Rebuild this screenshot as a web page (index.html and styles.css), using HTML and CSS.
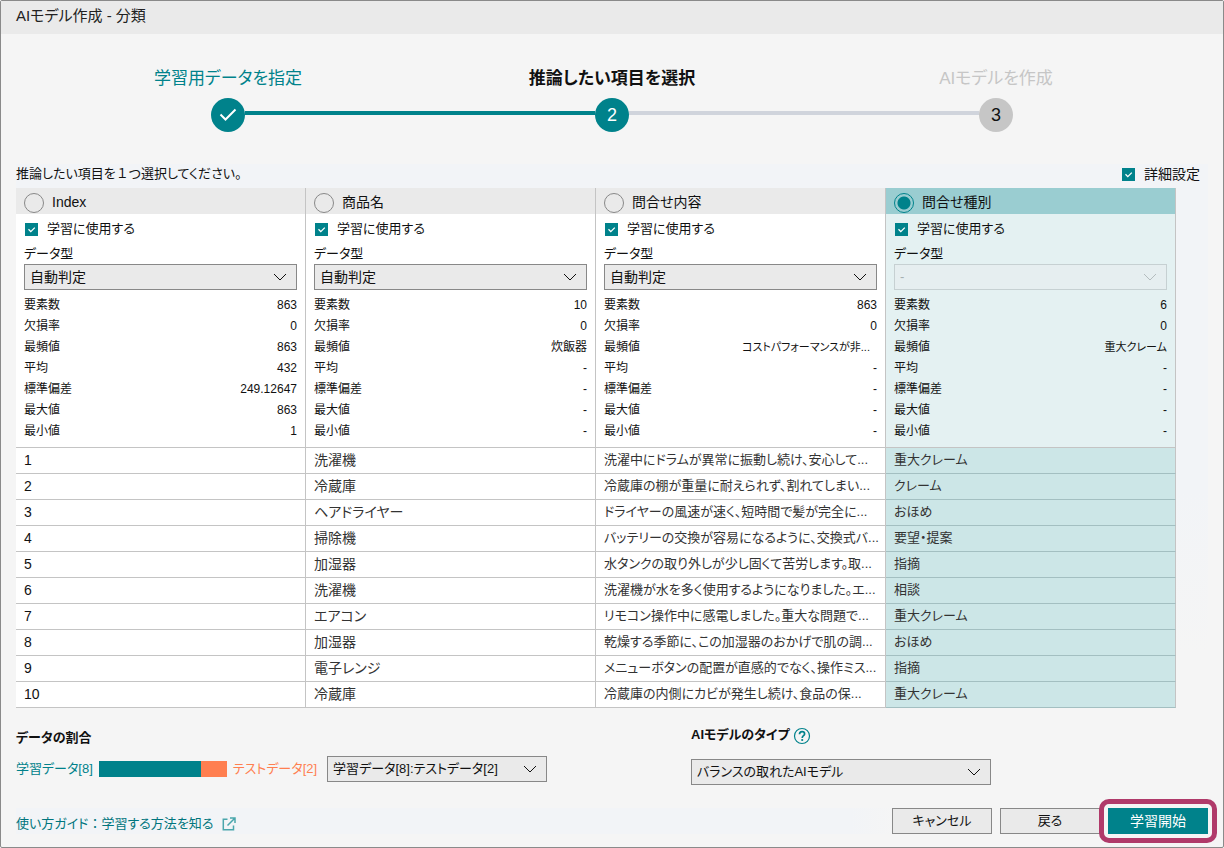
FILE: index.html
```html
<!DOCTYPE html>
<html lang="ja">
<head>
<meta charset="utf-8">
<meta name="viewport" content="width=device-width, initial-scale=1">
<title>AIモデル作成 - 分類</title>
<link rel="stylesheet" href="styles.css">
</head>
<body>
<svg class="symbols" aria-hidden="true">
  <symbol id="chevron" viewBox="0 0 14 8"><path d="M1 1l6 6 6-6" fill="none" stroke="currentColor" stroke-width="1"/></symbol>
</svg>
<main class="window">
  <header class="titlebar"><h1 class="title">AIモデル作成 - 分類</h1></header>

  <ol class="steps">
    <li class="step step-done">
      <span class="step-label">学習用データを指定</span>
      <div class="track"><i class="line line-none"></i><span class="dot"><svg width="18" height="14" viewBox="0 0 18 14" role="img" aria-label="完了"><path d="M1.500 6.500l5 5L16.500 1.500" fill="none" stroke="#fff" stroke-width="2"/></svg></span><i class="line line-done"></i></div>
    </li>
    <li class="step step-current" aria-current="step">
      <span class="step-label">推論したい項目を選択</span>
      <div class="track"><i class="line line-done"></i><span class="dot">2</span><i class="line"></i></div>
    </li>
    <li class="step step-next">
      <span class="step-label">AIモデルを作成</span>
      <div class="track"><i class="line"></i><span class="dot">3</span><i class="line line-none"></i></div>
    </li>
  </ol>

  <section class="items">
    <div class="items-head">
      <p class="caption">推論したい項目を<span class="wide">１</span>つ選択してください。</p>
      <label class="check advanced"><input type="checkbox" class="box" checked><span>詳細設定</span></label>
    </div>
    <table class="grid">
      <thead>
        <tr class="names">
          <th scope="col"><label class="pick"><input type="radio" class="radio" name="target"><span>Index</span></label></th>
          <th scope="col"><label class="pick"><input type="radio" class="radio" name="target"><span>商品名</span></label></th>
          <th scope="col"><label class="pick"><input type="radio" class="radio" name="target"><span>問合せ内容</span></label></th>
          <th scope="col" class="chosen"><label class="pick"><input type="radio" class="radio" name="target" checked><span>問合せ種別</span></label></th>
        </tr>
        <tr class="details">
          <td>
            <label class="check"><input type="checkbox" class="box" checked><span>学習に使用する</span></label>
            <label class="type" for="type1">データ型</label>
            <div class="select"><select id="type1" class="kanji"><option>自動判定</option></select><svg class="chevron"><use href="#chevron"/></svg></div>
            <dl class="stats"><dt>要素数</dt><dd>863</dd><dt>欠損率</dt><dd>0</dd><dt>最頻値</dt><dd>863</dd><dt>平均</dt><dd>432</dd><dt>標準偏差</dt><dd>249.12647</dd><dt>最大値</dt><dd>863</dd><dt>最小値</dt><dd>1</dd></dl>
          </td>
          <td>
            <label class="check"><input type="checkbox" class="box" checked><span>学習に使用する</span></label>
            <label class="type" for="type2">データ型</label>
            <div class="select"><select id="type2" class="kanji"><option>自動判定</option></select><svg class="chevron"><use href="#chevron"/></svg></div>
            <dl class="stats"><dt>要素数</dt><dd>10</dd><dt>欠損率</dt><dd>0</dd><dt>最頻値</dt><dd>炊飯器</dd><dt>平均</dt><dd>-</dd><dt>標準偏差</dt><dd>-</dd><dt>最大値</dt><dd>-</dd><dt>最小値</dt><dd>-</dd></dl>
          </td>
          <td>
            <label class="check"><input type="checkbox" class="box" checked><span>学習に使用する</span></label>
            <label class="type" for="type3">データ型</label>
            <div class="select"><select id="type3" class="kanji"><option>自動判定</option></select><svg class="chevron"><use href="#chevron"/></svg></div>
            <dl class="stats"><dt>要素数</dt><dd>863</dd><dt>欠損率</dt><dd>0</dd><dt>最頻値</dt><dd class="phrase clipped">コストパフォーマンスが非...</dd><dt>平均</dt><dd>-</dd><dt>標準偏差</dt><dd>-</dd><dt>最大値</dt><dd>-</dd><dt>最小値</dt><dd>-</dd></dl>
          </td>
          <td class="chosen">
            <label class="check"><input type="checkbox" class="box" checked><span>学習に使用する</span></label>
            <label class="type" for="type4">データ型</label>
            <div class="select"><select id="type4" disabled><option>-</option></select><svg class="chevron"><use href="#chevron"/></svg></div>
            <dl class="stats"><dt>要素数</dt><dd>6</dd><dt>欠損率</dt><dd>0</dd><dt>最頻値</dt><dd class="phrase">重大クレーム</dd><dt>平均</dt><dd>-</dd><dt>標準偏差</dt><dd>-</dd><dt>最大値</dt><dd>-</dd><dt>最小値</dt><dd>-</dd></dl>
          </td>
        </tr>
      </thead>
      <tbody class="records">
        <tr><td>1</td><td>洗濯機</td><td>洗濯中にドラムが異常に振動し続け、安心して...</td><td class="chosen">重大クレーム</td></tr>
        <tr><td>2</td><td>冷蔵庫</td><td>冷蔵庫の棚が重量に耐えられず、割れてしまい...</td><td class="chosen">クレーム</td></tr>
        <tr><td>3</td><td>ヘアドライヤー</td><td>ドライヤーの風速が速く、短時間で髪が完全に...</td><td class="chosen">おほめ</td></tr>
        <tr><td>4</td><td>掃除機</td><td>バッテリーの交換が容易になるように、交換式バ...</td><td class="chosen">要望・提案</td></tr>
        <tr><td>5</td><td>加湿器</td><td>水タンクの取り外しが少し固くて苦労します。取...</td><td class="chosen">指摘</td></tr>
        <tr><td>6</td><td>洗濯機</td><td>洗濯機が水を多く使用するようになりました。エ...</td><td class="chosen">相談</td></tr>
        <tr><td>7</td><td>エアコン</td><td>リモコン操作中に感電しました。重大な問題で...</td><td class="chosen">重大クレーム</td></tr>
        <tr><td>8</td><td>加湿器</td><td>乾燥する季節に、この加湿器のおかげで肌の調...</td><td class="chosen">おほめ</td></tr>
        <tr><td>9</td><td>電子レンジ</td><td>メニューボタンの配置が直感的でなく、操作ミス...</td><td class="chosen">指摘</td></tr>
        <tr><td>10</td><td>冷蔵庫</td><td>冷蔵庫の内側にカビが発生し続け、食品の保...</td><td class="chosen">重大クレーム</td></tr>
      </tbody>
    </table>
  </section>

  <section class="options">
    <div class="option split">
      <label class="option-name" for="ratio">データの割合</label>
      <div class="ratio">
        <span class="train">学習データ[8]</span>
        <div class="bar"><i class="bar-train" style="width:80%"></i></div>
        <span class="test">テストデータ[2]</span>
        <div class="select ratio-select"><select id="ratio"><option>学習データ[8]:テストデータ[2]</option></select><svg class="chevron"><use href="#chevron"/></svg></div>
      </div>
    </div>
    <div class="option model">
      <div class="model-head">
        <label class="option-name" for="model">AIモデルのタイプ</label>
        <button class="help" type="button" aria-label="ヘルプ"><svg width="18" height="18" viewBox="0 0 18 18"><circle cx="9" cy="9" r="7.500" fill="none" stroke="#00828b" stroke-width="1.200"/><path d="M6.500 7.300C6.500 5.600 7.600 4.600 9.100 4.600s2.500.9 2.500 2.300c0 1.700-2.400 2-2.400 4" fill="none" stroke="#00828b" stroke-width="1.700"/><circle cx="9.200" cy="13" r="1.100" fill="#00828b"/></svg></button>
      </div>
      <div class="select"><select id="model"><option>バランスの取れたAIモデル</option></select><svg class="chevron"><use href="#chevron"/></svg></div>
    </div>
  </section>

  <footer class="footer">
    <a class="guide" href="#"><span>使い方ガイド<span class="wide">：</span>学習する方法を知る</span><svg width="14" height="14" viewBox="0 0 14 14" fill="none" stroke="#4aa6ac" stroke-width="1.500"><path d="M5.500 2.200H1.300v10.500h10.200V8.500M8 1h5v5M13 1L5.500 8.500"/></svg></a>
    <button class="button" type="button">キャンセル</button>
    <button class="button" type="button">戻る</button>
    <button class="button primary" type="button">学習開始</button>
  </footer>
</main>
</body>
</html>
```

FILE: styles.css
```css
* { box-sizing: border-box; }

body {
  margin: 0;
  background: #f5f5f5;
  color: #111;
  font: 13px/20px "Liberation Sans", "Noto Sans CJK JP", sans-serif;
  font-feature-settings: "palt";
}

h1, p, ol, dl, dd { margin: 0; }
button, select, input { font: inherit; font-feature-settings: inherit; color: inherit; margin: 0; }

.symbols { position: absolute; width: 0; height: 0; }
.wide { font-feature-settings: normal; }

.window {
  display: flex;
  flex-direction: column;
  min-height: 100vh;
  border: 1px solid #8a8a8a;
  border-radius: 2px;
}

.titlebar { padding: 3px 15px 6px; background: #eaeaea; }
.title { font-size: 15px; line-height: 24px; font-weight: 400; color: #222; }

/* progress steps */
.steps {
  display: grid;
  grid-template-columns: repeat(3, 1fr);
  padding: 33px 35px 32px;
  list-style: none;
}
.step { text-align: center; }
.step-label { display: block; font-size: 17px; line-height: 24px; }
.step-done .step-label { color: #00828b; }
.step-current .step-label { font-weight: 700; }
.step-next .step-label { color: #c6c6c6; }
.track { display: flex; margin-top: 7px; }
.line { flex: 1; height: 4px; margin-top: 13px; background: #d0d4dc; }
.line-done { background: #00828b; }
.line-none { background: none; }
.dot {
  display: flex;
  align-items: center;
  justify-content: center;
  width: 34px;
  height: 34px;
  border-radius: 50%;
  background: #00828b;
  color: #fff;
  font-size: 18px;
}
.step-next .dot { background: #c6c6c6; color: #111; }

/* item table */
.items { margin: 0 15px; padding-right: 32px; background: linear-gradient(#f2f4f7, #f2f4f7 60%, #f5f5f5 90%); }
.items-head { display: flex; justify-content: space-between; height: 24px; margin-right: -24px; }
.check { display: flex; align-items: center; gap: 9px; }
.advanced { height: 20px; font-size: 14px; }
.box {
  appearance: none;
  width: 13px;
  height: 13px;
  margin-left: 1px;
  background: #00828b url("data:image/svg+xml,%3Csvg xmlns='http://www.w3.org/2000/svg' viewBox='0 0 13 13'%3E%3Cpath d='M3.500 6.300l2.300 2.300 4-4' fill='none' stroke='white' stroke-width='1.300'/%3E%3C/svg%3E");
}
.grid { width: 100%; table-layout: fixed; border-collapse: separate; border-spacing: 0; background: #fff; }
.grid th, .grid td { padding: 0 8px; border-right: 1px solid #c4c4c4; text-align: left; font-weight: 400; }
.names th { height: 26px; background: #eaeaea; font-size: 14px; }
.names .chosen { background: #9acdd1; }
.pick { display: flex; align-items: flex-end; gap: 8px; padding-top: 2px; line-height: 22px; }
.radio {
  appearance: none;
  width: 20px;
  height: 20px;
  border: 1px solid #888;
  border-radius: 50%;
}
.radio:checked { border-color: #00828b; background: radial-gradient(circle closest-side, #00828b 6px, transparent 7px); }
.details td { padding: 5px 8px; border-bottom: 1px solid #c4c4c4; }
.details .chosen { background: #e4f1f2; }
.type { display: block; margin-top: 4px; line-height: 21px; }

.select { display: grid; align-items: center; }
.select select {
  appearance: none;
  grid-area: 1 / 1;
  width: 100%;
  height: 26px;
  padding: 0 32px 0 5px;
  border: 1px solid #888;
  border-radius: 0;
  background: #eaeaea;
}
.select .kanji { font-size: 14px; }
.select select:disabled { border-color: #c6d0d2; background: #e6eef0; color: #a5afb0; opacity: 1; }
.chevron { grid-area: 1 / 1; justify-self: end; width: 14px; height: 8px; margin-right: 10px; pointer-events: none; }
.select select:disabled + .chevron { color: #b4bcbe; }

.stats { display: grid; grid-template-columns: auto 1fr; margin-top: 5px; font-size: 12px; line-height: 21px; }
.stats dd { text-align: right; white-space: nowrap; }
.stats .phrase { font-size: 11px; }
.stats .clipped { padding-right: 7px; }

.records td {
  height: 26px;
  border-bottom: 1px solid #c4c4c4;
  color: #333;
  white-space: nowrap;
}
.grid .records td { padding-bottom: 1px; }
.records td:nth-child(-n+2) { font-size: 14px; }
.records td:first-child { color: #111; }
.records .chosen { background: #cce6e7; border-bottom-color: #a3bfc1; }

/* options */
.options { display: grid; grid-template-columns: 675px 300px; padding: 17px 15px 0; }
.option-name { font-weight: 700; }
.split { padding-top: 3px; }
.ratio { display: flex; align-items: center; margin-top: 8px; }
.train { color: #00828b; }
.test { color: #ff7f50; }
.bar { width: 128px; height: 16px; margin: 0 6px; background: #ff7f50; }
.bar-train { display: block; height: 100%; background: #00828b; }
.ratio-select { width: 220px; margin-left: 10px; }
.model-head { display: flex; align-items: center; gap: 3px; }
.help { display: flex; padding: 2px 0 0; border: 0; background: none; }
.model .select { margin-top: 14px; }

/* actions */
.footer { display: flex; align-items: center; gap: 8px; margin: auto 15px 13px; background: linear-gradient(90deg, #f2f4f7 70%, #f5f5f5 74%); }
.guide { display: flex; align-items: center; align-self: flex-end; gap: 8px; margin-right: auto; color: #00757d; text-decoration: none; }
.button { position: relative; width: 100px; height: 26px; padding: 0; border: 1px solid #888; background: #eaeaea; }
.primary { border: 0; background: #00828b; color: #fff; font-size: 14px; }
.primary::before, .primary::after { content: ""; position: absolute; border-style: solid; }
.primary::before { inset: -5px; border-width: 5px; border-color: #f5f5f5; }
.primary::after { inset: -9px; border-width: 5px; border-color: #b03a6a; border-radius: 10px; }
```
